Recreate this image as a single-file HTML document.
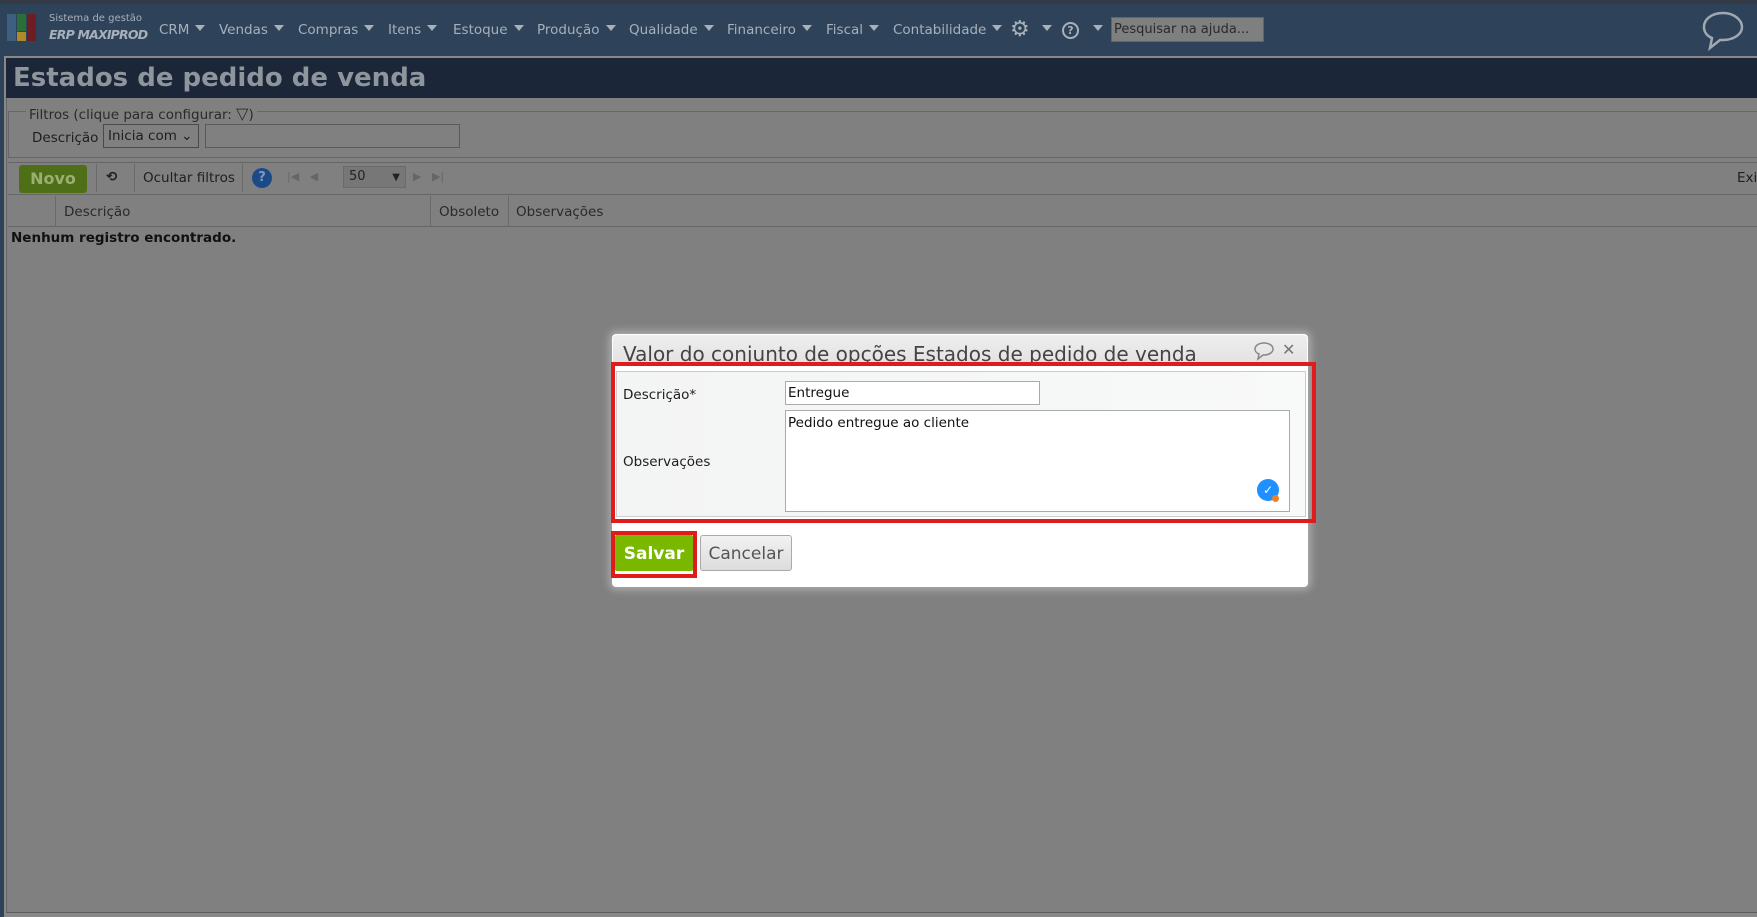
<!DOCTYPE html>
<html><head><meta charset="utf-8"><style>
*{margin:0;padding:0;box-sizing:border-box}
body{width:1757px;height:917px;overflow:hidden;background:#2e4259;font-family:"DejaVu Sans","Liberation Sans",sans-serif;position:relative}
.a{position:absolute}
.nav{color:#a7b0bb;font-size:13.5px;top:22px;white-space:nowrap}
.tri{display:inline-block;width:0;height:0;border-left:5px solid transparent;border-right:5px solid transparent;border-top:6px solid #a7b0bb;margin-left:6px;vertical-align:3px}
.t{font-size:13.5px;color:#1e1e1e;white-space:nowrap}
</style></head><body>
<div class="a" style="left:0;top:0;width:1757px;height:4px;background:#343b47"></div>
<div class="a" style="left:7px;top:14px;width:9px;height:27px;background:#3d5f80"></div>
<div class="a" style="left:17px;top:14px;width:9px;height:17px;background:#2a6e3a"></div>
<div class="a" style="left:17px;top:32px;width:9px;height:9px;background:#b08a2a"></div>
<div class="a" style="left:27px;top:14px;width:9px;height:27px;background:#6e1e22"></div>
<div class="a" style="left:49px;top:13px;font-size:10px;color:#a7b0bb">Sistema de gestão</div>
<div class="a" style="left:49px;top:27px;font-size:12.5px;color:#a7b0bb;font-style:italic;font-weight:bold;letter-spacing:-0.8px">ERP MAXIPROD</div>
<div class="a nav" style="left:159px">CRM<span class="tri"></span></div>
<div class="a nav" style="left:219px">Vendas<span class="tri"></span></div>
<div class="a nav" style="left:298px">Compras<span class="tri"></span></div>
<div class="a nav" style="left:388px">Itens<span class="tri"></span></div>
<div class="a nav" style="left:453px">Estoque<span class="tri"></span></div>
<div class="a nav" style="left:537px">Produção<span class="tri"></span></div>
<div class="a nav" style="left:629px">Qualidade<span class="tri"></span></div>
<div class="a nav" style="left:727px">Financeiro<span class="tri"></span></div>
<div class="a nav" style="left:826px">Fiscal<span class="tri"></span></div>
<div class="a nav" style="left:893px">Contabilidade<span class="tri"></span></div>
<div class="a" style="left:1010px;top:17px;font-size:22px;color:#a7b0bb">⚙</div>
<div class="a nav" style="left:1036px;top:22px"><span class="tri"></span></div>
<div class="a" style="left:1062px;top:22px;width:17px;height:17px;border:2px solid #a7b0bb;border-radius:50%;color:#a7b0bb;font-size:11px;text-align:center;line-height:13px;font-weight:bold">?</div>
<div class="a nav" style="left:1087px;top:22px"><span class="tri"></span></div>
<div class="a" style="left:1111px;top:17px;width:153px;height:25px;background:#7f7f7f;border:1px solid #5c6570;color:#2a2a2a;font-size:13px;padding:4px 2px">Pesquisar na ajuda...</div>
<svg class="a" style="left:1700px;top:10px" width="46" height="42" viewBox="0 0 46 42"><path d="M23 3C12 3 4 9 4 17c0 5 3 9 8 11l-2 10 10-8c1 0 2 0 3 0 11 0 19-6 19-13S34 3 23 3z" fill="none" stroke="#a0a8b2" stroke-width="2.5"/></svg>
<div class="a" style="left:4px;top:56px;width:1753px;height:861px;background:#888"></div>
<div class="a" style="left:6px;top:58px;width:1751px;height:40px;background:#1b2738"></div>
<div class="a" style="left:13px;top:63px;font-size:26px;font-weight:bold;color:#8f959c">Estados de pedido de venda</div>
<div class="a" style="left:6px;top:98px;width:1751px;height:815px;background:#808080;border-left:1px solid #666;border-bottom:1px solid #5e5e5e"></div>
<div class="a" style="left:8px;top:111px;width:1749px;height:47px;border:1px solid #666;border-right:none"></div>
<div class="a t" style="left:26px;top:104px;background:#808080;padding:0 3px;color:#2a2a2a">Filtros (clique para configurar: <span style="font-size:16px">▽</span>)</div>
<div class="a t" style="left:32px;top:130px">Descrição</div>
<div class="a" style="left:103px;top:124px;width:96px;height:24px;border:1px solid #4a4a4a;font-size:13.5px;padding:3px 4px;color:#1e1e1e">Inicia com ⌄</div>
<div class="a" style="left:205px;top:124px;width:255px;height:24px;border:1px solid #5a5a5a"></div>
<div class="a" style="left:8px;top:162px;width:1749px;height:33px;border-top:1px solid #666;border-bottom:1px solid #666"></div>
<div class="a" style="left:19px;top:165px;width:68px;height:28px;background:#4f6e18;border-radius:3px;color:#99b070;font-weight:bold;font-size:16px;text-align:center;line-height:28px">Novo</div>
<div class="a" style="left:96px;top:164px;width:1px;height:28px;background:#6a6a6a"></div>
<div class="a t" style="left:106px;top:169px;font-weight:bold">⟲</div>
<div class="a" style="left:134px;top:164px;width:1px;height:28px;background:#6a6a6a"></div>
<div class="a t" style="left:143px;top:170px">Ocultar filtros</div>
<div class="a" style="left:242px;top:164px;width:1px;height:28px;background:#6a6a6a"></div>
<div class="a" style="left:252px;top:168px;width:20px;height:20px;border-radius:50%;background:#1c4a86;color:#7f9ac0;font-weight:bold;font-size:13px;text-align:center;line-height:20px">?</div>
<div class="a t" style="left:287px;top:170px;color:#666;font-size:11px">|◀ &nbsp; ◀</div>
<div class="a" style="left:343px;top:166px;width:63px;height:22px;background:#777;border:1px solid #6a6a6a;font-size:13px;padding:2px 5px;color:#222">50 <span style="float:right;font-size:10px;margin-top:3px">▼</span></div>
<div class="a t" style="left:413px;top:170px;color:#666;font-size:11px">▶ &nbsp; ▶|</div>
<div class="a t" style="left:1737px;top:170px">Exi</div>
<div class="a" style="left:8px;top:196px;width:1749px;height:31px;border-bottom:1px solid #666"></div>
<div class="a" style="left:55px;top:196px;width:1px;height:31px;background:#6a6a6a"></div>
<div class="a t" style="left:64px;top:204px;color:#2a2a2a">Descrição</div>
<div class="a" style="left:430px;top:196px;width:1px;height:31px;background:#6a6a6a"></div>
<div class="a t" style="left:439px;top:204px;color:#2a2a2a">Obsoleto</div>
<div class="a" style="left:508px;top:196px;width:1px;height:31px;background:#6a6a6a"></div>
<div class="a t" style="left:516px;top:204px;color:#2a2a2a">Observações</div>
<div class="a t" style="left:11px;top:230px;font-weight:bold;color:#111">Nenhum registro encontrado.</div>
<div class="a" style="left:612px;top:334px;width:696px;height:253px;background:#fff;border-radius:4px;box-shadow:0 0 8px 3px rgba(255,255,255,0.35)"></div>
<div class="a" style="left:613px;top:335px;width:694px;height:30px;background:linear-gradient(#eee,#e2e2e2);border-radius:4px 4px 0 0;overflow:hidden"><div style="position:absolute;left:10px;top:7px;font-size:20px;color:#444;white-space:nowrap">Valor do conjunto de opções Estados de pedido de venda</div></div>
<svg class="a" style="left:1253px;top:341px" width="22" height="20" viewBox="0 0 22 20"><path d="M11 2C6 2 2 4.5 2 8c0 2.5 2 4.3 4 5l-1 5 5-4h1c5 0 9-2.5 9-6s-4-6-9-6z" fill="none" stroke="#888" stroke-width="1.5"/></svg>
<div class="a" style="left:1282px;top:340px;font-size:16px;font-weight:bold;color:#777">✕</div>
<div class="a" style="left:611px;top:362px;width:705px;height:161px;border:4px solid #e01b1b"></div>
<div class="a" style="left:616px;top:371px;width:690px;height:146px;border:1px solid #ccc;background:linear-gradient(90deg,#f3f4f4,#f8f9f9)"></div>
<div class="a t" style="left:623px;top:387px">Descrição*</div>
<div class="a t" style="left:623px;top:454px">Observações</div>
<div class="a" style="left:785px;top:381px;width:255px;height:24px;background:#fff;border:1px solid #aaa;font-size:13.5px;padding:3px 2px;color:#111">Entregue</div>
<div class="a" style="left:785px;top:410px;width:505px;height:102px;background:#fff;border:1px solid #aaa;font-size:13.5px;padding:4px 2px;color:#111">Pedido entregue ao cliente</div>
<div class="a" style="left:1257px;top:479px;width:22px;height:22px;border-radius:50%;background:#1e90ff;color:#fff;font-size:12px;text-align:center;line-height:22px;font-weight:bold">✓</div>
<div class="a" style="left:1272px;top:495px;width:7px;height:7px;border-radius:50%;background:#f08020"></div>
<div class="a" style="left:611px;top:531px;width:86px;height:47px;border:4px solid #e01b1b"></div>
<div class="a" style="left:615px;top:535px;width:78px;height:36px;background:#7ab800;border-radius:2px;color:#fff;font-weight:bold;font-size:17px;text-align:center;line-height:38px">Salvar</div>
<div class="a" style="left:700px;top:535px;width:92px;height:36px;background:linear-gradient(#f2f2f2,#dcdcdc);border:1px solid #aaa;border-radius:3px;color:#555;font-size:17px;text-align:center;line-height:36px">Cancelar</div>
</body></html>
